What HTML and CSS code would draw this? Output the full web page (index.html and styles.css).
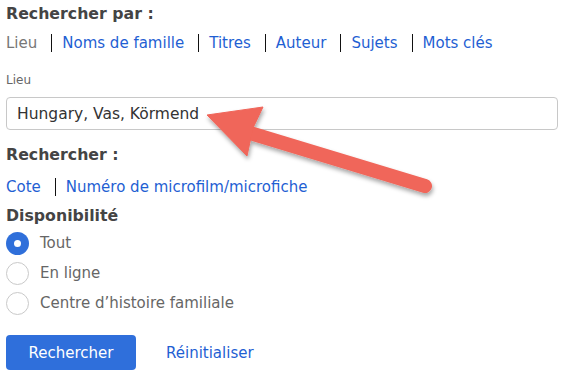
FILE: index.html
```html
<!DOCTYPE html>
<html lang="fr">
<head>
<meta charset="utf-8">
<title>Rechercher</title>
<link rel="stylesheet" href="styles.css">
</head>
<body>
<div class="page">
  <h2 class="heading">Rechercher par :</h2>
  <nav class="tabs">
    <span class="tab current">Lieu</span>
    <a class="tab" href="#">Noms de famille</a>
    <a class="tab" href="#">Titres</a>
    <a class="tab" href="#">Auteur</a>
    <a class="tab" href="#">Sujets</a>
    <a class="tab" href="#">Mots clés</a>
  </nav>
  <label class="field-label" for="lieu">Lieu</label>
  <input id="lieu" class="text-input" type="text" value="Hungary, Vas, Körmend">
  <h2 class="heading heading-2">Rechercher :</h2>
  <nav class="tabs tabs-2">
    <a class="tab" href="#">Cote</a>
    <a class="tab" href="#">Numéro de microfilm/microfiche</a>
  </nav>
  <h2 class="heading heading-3">Disponibilité</h2>
  <div class="radios">
    <div class="radio-row"><span class="radio checked"></span><span class="radio-label">Tout</span></div>
    <div class="radio-row"><span class="radio"></span><span class="radio-label">En ligne</span></div>
    <div class="radio-row"><span class="radio"></span><span class="radio-label">Centre d’histoire familiale</span></div>
  </div>
  <div class="actions">
    <button class="btn" type="button">Rechercher</button>
    <a class="reset" href="#">Réinitialiser</a>
  </div>
</div>
<svg class="arrow" width="563" height="374" viewBox="0 0 563 374">
  <defs>
    <filter id="sh" x="-20%" y="-20%" width="140%" height="160%">
      <feDropShadow dx="1" dy="3" stdDeviation="2" flood-color="#000" flood-opacity="0.35"/>
    </filter>
  </defs>
  <g filter="url(#sh)" fill="#f0665a" stroke="#f0665a">
    <line x1="250" y1="133" x2="425" y2="186" stroke-width="14" stroke-linecap="round"/>
    <polygon points="207,115 263,107 253,128 247,156" stroke-width="1" stroke-linejoin="round"/>
  </g>
</svg>
</body>
</html>
```

FILE: styles.css
```css
html, body {
  margin: 0;
  padding: 0;
  background: #fff;
}
body {
  font-family: "DejaVu Sans", Verdana, sans-serif;
  width: 563px;
  height: 374px;
  overflow: hidden;
  position: relative;
}
.page {
  padding: 4px 5px 0 6px;
}
.heading {
  margin: 0;
  font-size: 15.75px;
  line-height: 20px;
  font-weight: bold;
  color: #444;
}
.tabs {
  display: flex;
  margin-top: 10px;
  font-size: 15px;
  line-height: 18px;
}
.tab {
  padding: 0 14px 0 10px;
  border-left: 1px solid #111;
  color: #1f5fd3;
  text-decoration: none;
  white-space: nowrap;
}
.tab:first-child {
  padding-left: 0;
  border-left: none;
}
.tab.current {
  color: #777;
}
.field-label {
  display: block;
  margin-top: 20px;
  font-size: 12px;
  line-height: 16px;
  color: #666;
}
.text-input {
  display: block;
  box-sizing: border-box;
  width: 552px;
  height: 33px;
  margin: 9px 0 0;
  padding: 0 10px;
  border: 1px solid #c8c8c8;
  border-radius: 4px;
  font-family: "DejaVu Sans", Verdana, sans-serif;
  font-size: 15.5px;
  color: #333;
  background: #fff;
  outline: none;
}
.heading-2 {
  margin-top: 15px;
}
.tabs-2 {
  margin-top: 13px;
}
.heading-3 {
  margin-top: 10px;
}
.radios {
  display: flex;
  flex-direction: column;
  gap: 6px;
  margin-top: 5px;
}
.radio-row {
  display: flex;
  align-items: center;
  height: 24px;
  gap: 11px;
}
.radio {
  box-sizing: border-box;
  width: 23px;
  height: 23px;
  border-radius: 50%;
  border: 1px solid #c9c9c9;
  background: #fff;
  position: relative;
}
.radio.checked {
  border: none;
  background: #2f6fda;
}
.radio.checked::after {
  content: "";
  position: absolute;
  left: 8px;
  top: 8px;
  width: 7px;
  height: 7px;
  border-radius: 50%;
  background: #fff;
}
.radio-label {
  font-size: 15px;
  color: #666;
}
.actions {
  display: flex;
  align-items: center;
  gap: 30px;
  margin-top: 20px;
}
.btn {
  width: 130px;
  height: 35px;
  border: none;
  border-radius: 4px;
  background: #2f6fdb;
  color: #fff;
  font-family: "DejaVu Sans", Verdana, sans-serif;
  font-size: 15px;
}
.reset {
  color: #1f5fd3;
  font-size: 15px;
  text-decoration: none;
}
.arrow {
  position: absolute;
  left: 0;
  top: 0;
  pointer-events: none;
}
```
